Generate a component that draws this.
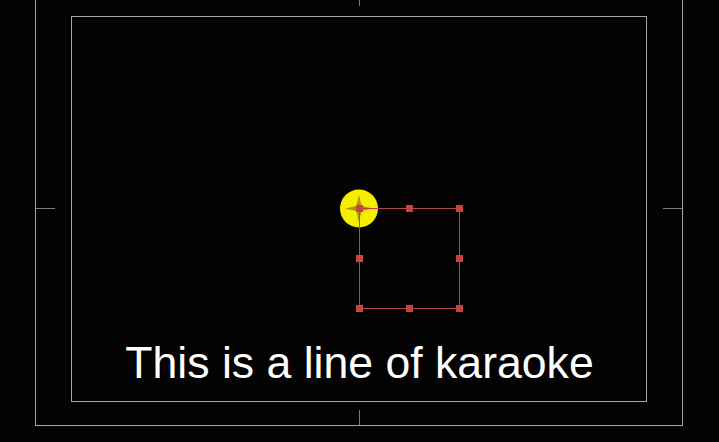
import * as React from "react";

const handles = [
  [359, 208], [409, 208], [459, 208],
  [359, 258], [459, 258],
  [359, 308], [409, 308], [459, 308],
];

export default function App() {
  return (
    <div className="relative w-[719px] h-[442px] overflow-hidden bg-[#030303]">
      {/* Guides and selection box */}
      <svg className="absolute inset-0" width="719" height="442" viewBox="0 0 719 442">
        <g fill="none" shapeRendering="crispEdges">
          <rect x="35.5" y="-9.5" width="647" height="435" stroke="#a6a6a6" />
          <rect x="71.5" y="16.5" width="575" height="385" stroke="#a6a6a6" />
          <line x1="359.5" y1="0" x2="359.5" y2="6" stroke="#7a7a7a" />
          <line x1="359.5" y1="410" x2="359.5" y2="425" stroke="#7a7a7a" />
          <line x1="36" y1="208.5" x2="55" y2="208.5" stroke="#7a7a7a" />
          <line x1="663" y1="208.5" x2="682" y2="208.5" stroke="#7a7a7a" />
        </g>

        <circle cx="359" cy="208.5" r="19" fill="#f5ee00" />
        <path
          d="M359 195 L361.5 206 L373 208.5 L361.5 211 L359 223 L356.5 211 L345 208.5 L356.5 206 Z"
          fill="#9c8a1a"
          opacity="0.9"
        />

        <g fill="none" stroke="#b84848" shapeRendering="crispEdges">
          <rect x="359.5" y="208.5" width="100" height="100" />
        </g>
        <circle cx="359.5" cy="208.5" r="3" fill="#b03838" />
        {handles.map(([x, y]) => (
          <rect key={`${x}-${y}`} x={x - 3} y={y - 3} width="7" height="7" fill="#c84242" />
        ))}
      </svg>

      {/* Karaoke line */}
      <div className="absolute left-0 right-0 top-[340px] text-center text-white text-[44.6px] leading-[45px] font-['Liberation_Sans',Arial,sans-serif]">
        This is a line of karaoke
      </div>
    </div>
  );
}
